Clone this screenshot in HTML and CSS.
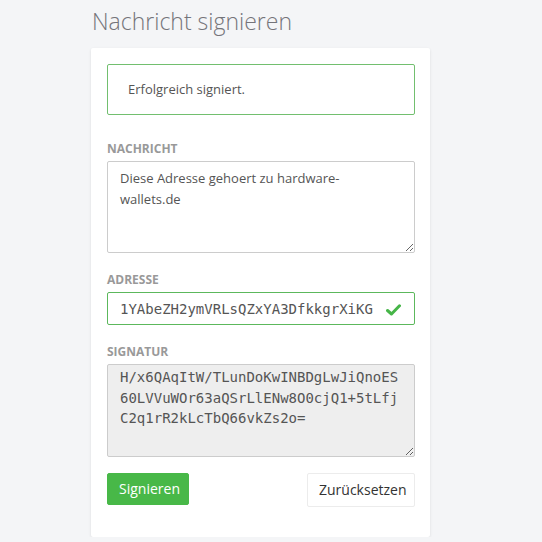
FILE: index.html
```html
<!DOCTYPE html>
<html lang="de">
<head>
<meta charset="utf-8">
<title>Nachricht signieren</title>
<link rel="stylesheet" href="styles.css">
</head>
<body>
<main class="page">
  <h1 class="title">Nachricht signieren</h1>
  <section class="card">
    <div class="alert">Erfolgreich signiert.</div>
    <div class="group">
      <label class="label" for="msg">NACHRICHT</label>
      <textarea id="msg" class="field area msg">Diese Adresse gehoert zu hardware-wallets.de</textarea>
    </div>
    <div class="group">
      <label class="label" for="addr">ADRESSE</label>
      <div class="input-wrap">
        <input id="addr" class="field input mono valid" value="1YAbeZH2ymVRLsQZxYA3DfkkgrXiKG">
        <svg class="check" width="15" height="12" viewBox="0 0 15 12"><path d="M1.5 6.5 L5.5 10 L13.5 1.8" fill="none" stroke="#46b548" stroke-width="3" stroke-linecap="round" stroke-linejoin="round"/></svg>
      </div>
    </div>
    <div class="group group-last">
      <label class="label" for="sig">SIGNATUR</label>
      <textarea id="sig" class="field area mono readonly" readonly>H/x6QAqItW/TLunDoKwINBDgLwJiQnoES60LVVuWOr63aQSrLlENw8O0cjQ1+5tLfjC2q1rR2kLcTbQ66vkZs2o=</textarea>
    </div>
    <div class="actions">
      <button class="btn btn-primary" type="button">Signieren</button>
      <button class="btn btn-default" type="button">Zurücksetzen</button>
    </div>
  </section>
</main>
</body>
</html>
```

FILE: styles.css
```css
html, body {
  margin: 0;
  padding: 0;
  background: #f4f5f7;
}
body {
  font-family: "Open Sans", "Noto Sans", sans-serif;
  color: #555;
}
.page {
  width: 339px;
  margin-left: 91px;
  padding-top: 8px;
}
.title {
  margin: 0 0 13px 1px;
  font-size: 23px;
  line-height: 27px;
  font-weight: 300;
  color: #74747a;
}
.card {
  background: #fff;
  box-shadow: 0 1px 3px rgba(0,0,0,0.10);
  border-radius: 2px;
  padding: 16px 15px 30px 16px;
  display: flex;
  flex-direction: column;
}
.alert {
  border: 1px solid #72bf6f;
  border-radius: 2px;
  padding: 15px 20px;
  font-size: 13px;
  line-height: 19px;
  color: #555;
  margin-bottom: 24.5px;
}
.group {
  display: flex;
  flex-direction: column;
  margin-bottom: 17.5px;
}
.group-last {
  margin-bottom: 16px;
}
.label {
  font-size: 12px;
  line-height: 17px;
  font-weight: 700;
  color: #999;
  margin-bottom: 4.5px;
}
.field {
  box-sizing: border-box;
  width: 308px;
  margin: 0;
  border: 1px solid #ccc;
  border-radius: 2px;
  background: #fff;
  color: #555;
  outline: none;
  font-family: "Open Sans", "Noto Sans", sans-serif;
  font-size: 13px;
}
.area {
  height: 92px;
  padding: 6px 12px;
  line-height: 20.5px;
  resize: vertical;
}
.msg {
  padding-right: 34px;
}
.mono {
  font-family: "DejaVu Sans Mono", "Liberation Mono", monospace;
  font-size: 14px;
  color: #555;
}
.readonly {
  height: 93px;
  background: #eee;
  padding: 2px 12px;
  line-height: 20.5px;
}
.input-wrap {
  position: relative;
  width: 308px;
}
.input {
  height: 33px;
  padding: 1px 40px 0 12px;
}
.valid {
  border-color: #5cb85c;
}
.check {
  position: absolute;
  left: 279px;
  top: 12px;
}
.actions {
  display: flex;
  justify-content: space-between;
  align-items: flex-start;
}
.btn {
  font-family: "Open Sans", "Noto Sans", sans-serif;
  font-size: 14px;
  line-height: 20px;
  border-radius: 2px;
  cursor: pointer;
  margin: 0;
}
.btn-primary {
  background: #48b848;
  border: 1px solid #48b848;
  color: #fff;
  padding: 5px 11px;
  height: 32px;
  width: 82px;
}
.btn-default {
  background: #fff;
  border: 1px solid #ececec;
  color: #333;
  padding: 6px 11px;
  height: 34px;
  width: 108px;
}
```
